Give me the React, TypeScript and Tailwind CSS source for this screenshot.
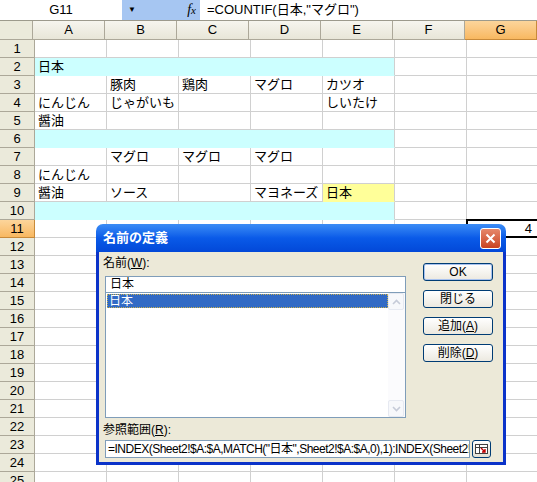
import React from 'react';

const COLS = ['A', 'B', 'C', 'D', 'E', 'F', 'G'];

const data: Record<number, Record<string, string>> = {
  2: { A: '日本' },
  3: { B: '豚肉', C: '鶏肉', D: 'マグロ', E: 'カツオ' },
  4: { A: 'にんじん', B: 'じゃがいも', E: 'しいたけ' },
  5: { A: '醤油' },
  7: { B: 'マグロ', C: 'マグロ', D: 'マグロ' },
  8: { A: 'にんじん' },
  9: { A: '醤油', B: 'ソース', D: 'マヨネーズ', E: '日本' },
};

const cyanRows = [2, 6, 10];
const filledCols = ['A', 'B', 'C', 'D', 'E'];

const rows = Array.from({ length: 25 }, (_, i) => i + 1);

const cellClass = (row: number, col: string) => {
  if (row === 9 && col === 'E') return 'bg-[#ffff99] border-b-[#ffff99] border-r-[#d0d0d0]';
  if (cyanRows.includes(row) && filledCols.includes(col)) {
    return col === 'E'
      ? 'bg-[#ccffff] border-b-[#ccffff] border-r-[#d0d0d0]'
      : 'bg-[#ccffff] border-b-[#ccffff] border-r-[#ccffff]';
  }
  return 'bg-white border-[#d0d0d0]';
};

const FormulaBar = () => (
  <div className="flex h-[21px] border-b border-[#9c9a8c] bg-white">
    <div className="w-[122px] text-center leading-[20px]">G11</div>
    <div className="relative flex w-[78px] items-center bg-[#a6c6f2]">
      <span className="ml-[6px] text-[8px] leading-none">▼</span>
      <span className="ml-auto mr-[4px] font-['Liberation_Serif',serif] text-[14px] italic leading-none">
        f<span className="text-[11px]">x</span>
      </span>
    </div>
    <div className="flex-1 pl-[7px] leading-[20px]">=COUNTIF(日本,"マグロ")</div>
  </div>
);

const ColumnHeader = () => (
  <div className="flex h-[19px]">
    <div className="w-[35px] border-r border-b border-[#aca899] bg-[#ebeadb]" />
    {COLS.map((c) => (
      <div
        key={c}
        className={
          'w-[72px] shrink-0 border-r border-b text-center leading-[18px] ' +
          (c === 'G'
            ? 'border-[#c88a3a] bg-linear-to-b from-[#fcd59b] to-[#f8b860]'
            : 'border-[#aca899] bg-linear-to-b from-[#f6f5ee] to-[#e8e6d8]')
        }
      >
        {c}
      </div>
    ))}
  </div>
);

const Grid = () => (
  <div>
    {rows.map((r) => (
      <div key={r} className="flex h-[18px]">
        <div
          className={
            'w-[35px] shrink-0 border-r border-b text-center leading-[17px] ' +
            (r === 11
              ? 'border-[#c88a3a] bg-linear-to-b from-[#fcd59b] to-[#f8b860]'
              : 'border-[#aca899] bg-[#ebeadb]')
          }
        >
          {r}
        </div>
        {COLS.map((c) => (
          <div
            key={c}
            className={
              'relative w-[72px] shrink-0 whitespace-nowrap border-r border-b pl-[3px] leading-[18px] ' +
              cellClass(r, c)
            }
          >
            {data[r]?.[c]}
            {r === 11 && c === 'G' && (
              <>
                <div className="absolute -left-[1px] -top-[1px] h-[19px] w-[73px] border-2 border-black" />
                <span className="absolute right-[6px] top-0">4</span>
              </>
            )}
          </div>
        ))}
      </div>
    ))}
  </div>
);

const XpButton = ({ children, primary }: { children: React.ReactNode; primary?: boolean }) => (
  <div
    className={
      'flex h-[18px] w-[70px] items-center justify-center rounded-[3px] border bg-linear-to-b from-white to-[#ece9e0] text-[12px] leading-none ' +
      (primary ? 'border-[#003c74] shadow-[inset_0_0_0_1px_#a8c2ef]' : 'border-[#003c74]')
    }
  >
    {children}
  </div>
);

const ScrollArrow = ({ up }: { up?: boolean }) => (
  <div className="flex h-[17px] w-[16px] items-center justify-center rounded-[2px] border border-[#e6e9f1] bg-[#f7f8fb]">
    <svg width="9" height="6" viewBox="0 0 9 6">
      <path
        d={up ? 'M1 5 L4.5 1.5 L8 5' : 'M1 1 L4.5 4.5 L8 1'}
        fill="none"
        stroke="#c6cbd8"
        strokeWidth="1.6"
      />
    </svg>
  </div>
);

const Dialog = () => (
  <div className="absolute left-[96px] top-[224px] flex h-[241px] w-[410px] flex-col text-[12px]">
    <div className="flex h-[28px] items-center rounded-t-[7px] bg-linear-to-b from-[#3b8cf5] via-[#0a5ae8] to-[#0348d8] pl-[7px] pr-[5px]">
      <span className="text-[13px] font-bold text-white">名前の定義</span>
      <div className="ml-auto flex h-[21px] w-[21px] items-center justify-center rounded-[3px] border border-white bg-linear-to-b from-[#e6886a] to-[#c8411f]">
        <svg width="11" height="11" viewBox="0 0 11 11">
          <path d="M1.5 1.5 L9.5 9.5 M9.5 1.5 L1.5 9.5" stroke="white" strokeWidth="2" />
        </svg>
      </div>
    </div>
    <div className="flex flex-1 flex-col border-x-[3px] border-b-[3px] border-[#0b33c9] bg-[#ece9d8]">
      <div className="flex">
        <div className="flex w-[307px] flex-col pl-[6px]">
          <div className="-ml-[2px] mt-[3px] h-[17px] leading-[17px]">
            名前(<span className="underline">W</span>):
          </div>
          <div className="mt-[4px] h-[17px] border border-[#7f9db9] bg-white pl-[4px] leading-[15px]">
            日本
          </div>
          <div className="flex h-[125px] border border-t-0 border-[#7f9db9] bg-white">
            <div className="flex-1 pl-[1px] pt-[1px]">
              <div className="h-[14px] bg-[#316ac5] pl-[2px] leading-[14px] text-white outline-1 outline-dotted outline-offset-[-1px] outline-[#c8b050]">
                日本
              </div>
            </div>
            <div className="flex w-[17px] flex-col justify-between bg-[#fbfbfd]">
              <ScrollArrow up />
              <ScrollArrow />
            </div>
          </div>
        </div>
        <div className="ml-[17px] flex flex-col gap-[9px] pt-[11px]">
          <XpButton primary>OK</XpButton>
          <XpButton>閉じる</XpButton>
          <XpButton>
            追加(<span className="underline">A</span>)
          </XpButton>
          <XpButton>
            削除(<span className="underline">D</span>)
          </XpButton>
        </div>
      </div>
      <div className="mt-[4px] h-[17px] pl-[4px] leading-[17px]">
        参照範囲(<span className="underline">R</span>):
      </div>
      <div className="mt-[1px] flex items-center pl-[6px]">
        <div className="h-[18px] w-[365px] overflow-hidden whitespace-nowrap border border-[#7f9db9] bg-white pl-[2px] leading-[16px] tracking-[-0.5px]">
          =INDEX(Sheet2!$A:$A,MATCH("日本",Sheet2!$A:$A,0),1):INDEX(Sheet2!$A:$A,MATCH("日本",Sheet2!$A:$A,0),COUNTIF(Sheet2!$A:$A,"日本"))
        </div>
        <div className="ml-[2px] flex h-[18px] w-[19px] items-center justify-center rounded-[3px] border border-[#003c74] bg-linear-to-b from-white to-[#e3e0d3]">
          <svg width="13" height="10" viewBox="0 0 13 10">
            <rect x="0.5" y="0.5" width="12" height="9" fill="white" stroke="#404040" />
            <path d="M0.5 3.5 H12.5 M4.5 0.5 V9.5" stroke="#404040" />
            <path d="M6 4 L10 8 M10 5 V8 H7" stroke="#c00000" strokeWidth="1.4" fill="none" />
          </svg>
        </div>
      </div>
    </div>
  </div>
);

export default function App() {
  return (
    <div className="relative h-[482px] w-[537px] overflow-hidden bg-white font-['Liberation_Sans','Noto_Sans_CJK_JP',sans-serif] text-[13px] text-black">
      <FormulaBar />
      <ColumnHeader />
      <Grid />
      <Dialog />
    </div>
  );
}
